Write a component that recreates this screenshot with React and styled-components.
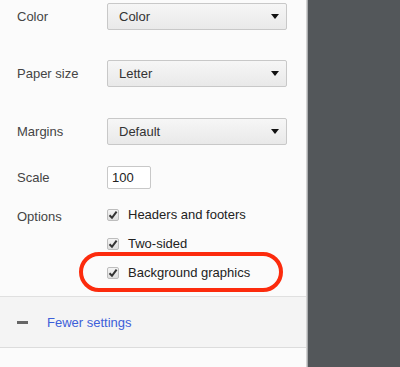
import React from 'react';
import styled, { createGlobalStyle } from 'styled-components';

const GlobalStyle = createGlobalStyle`
  html, body {
    margin: 0;
    padding: 0;
    background: #53575a;
    font-family: "Liberation Sans", Arial, sans-serif;
  }
`;

const Page = styled.div`
  display: flex;
  height: 367px;
  overflow: hidden;
`;

const Sidebar = styled.div`
  position: relative;
  width: 307px;
  height: 367px;
  background: #fbfbfb;
  border-right: 1px solid #d2d2d2;
  box-shadow: 1px 0 0 #a9abad;
  padding-top: 3px;
  box-sizing: border-box;
  overflow: hidden;
`;

const Row = styled.div`
  display: flex;
  align-items: ${(props) => (props.top ? 'flex-start' : 'center')};
  height: ${(props) => props.h}px;
  margin-bottom: ${(props) => props.mb || 0}px;
`;

const Label = styled.div`
  width: 90px;
  padding-left: 17px;
  font-size: 13px;
  color: #444;
  padding-top: ${(props) => props.pt || 0}px;
`;

const Select = styled.div`
  display: flex;
  align-items: center;
  justify-content: space-between;
  width: 180px;
  height: 27px;
  box-sizing: border-box;
  padding: 0 7px 0 11px;
  border: 1px solid #c8c8c8;
  border-radius: 2px;
  background: linear-gradient(#f6f6f6, #e9e9e9);
  font-size: 13px;
  color: #333;
`;

const Arrow = styled.span`
  width: 0;
  height: 0;
  border-left: 4px solid transparent;
  border-right: 4px solid transparent;
  border-top: 5px solid #111;
`;

const Input = styled.div`
  width: 44px;
  height: 23px;
  box-sizing: border-box;
  border: 1px solid #c8c8c8;
  border-radius: 2px;
  background: #fff;
  padding-left: 4px;
  display: flex;
  align-items: center;
  font-size: 13px;
  color: #222;
`;

const Options = styled.div`
  display: flex;
  flex-direction: column;
`;

const OptionRow = styled.div`
  display: flex;
  align-items: center;
  height: 29px;
  font-size: 13px;
  color: #222;
`;

const Check = styled.span`
  width: 12px;
  height: 12px;
  box-sizing: border-box;
  margin-right: 9px;
  border: 1px solid #bdbdbd;
  border-radius: 2px;
  background: linear-gradient(#f4f4f4, #dedede);
  display: flex;
  align-items: center;
  justify-content: center;
`;

const Divider = styled.div`
  border-top: 1px solid #e0e0e0;
  margin-top: 9px;
`;

const Footer = styled.div`
  display: flex;
  align-items: center;
  height: 50px;
  background: #f4f4f4;
  border-bottom: 1px solid #dcdcdc;
  padding-left: 17px;
`;

const Minus = styled.span`
  width: 11px;
  height: 3px;
  background: #666;
  margin-right: 19px;
`;

const Link = styled.span`
  font-size: 13px;
  color: #3d5fd9;
`;

const NextRow = styled.div`
  padding: 18px 0 0 30px;
  font-size: 13px;
  color: #999;
  white-space: nowrap;
`;

const Highlight = styled.div`
  position: absolute;
  left: 79px;
  top: 252px;
  width: 204px;
  height: 40px;
  box-sizing: border-box;
  border: 4px solid #fc2b0d;
  border-radius: 20px;
`;

const Preview = styled.div`
  flex: 1;
  background: #53575a;
`;

const CheckMark = () => (
  <svg width="10" height="10" viewBox="0 0 10 10">
    <path d="M1.5 5.2 L4 7.8 L8.6 1.6" fill="none" stroke="#333" strokeWidth="2" />
  </svg>
);

const SelectRow = ({ label, value, mb }) => (
  <Row h={27} mb={mb}>
    <Label>{label}</Label>
    <Select>
      {value}
      <Arrow />
    </Select>
  </Row>
);

const options = ['Headers and footers', 'Two-sided', 'Background graphics'];

export default function App() {
  return (
    <Page>
      <GlobalStyle />
      <Sidebar>
        <SelectRow label="Color" value="Color" mb={30} />
        <SelectRow label="Paper size" value="Letter" mb={31} />
        <SelectRow label="Margins" value="Default" mb={21} />
        <Row h={23} mb={11}>
          <Label>Scale</Label>
          <Input>100</Input>
        </Row>
        <Row top h={87}>
          <Label pt={9}>Options</Label>
          <Options>
            {options.map((o) => (
              <OptionRow key={o}>
                <Check>
                  <CheckMark />
                </Check>
                {o}
              </OptionRow>
            ))}
          </Options>
        </Row>
        <Divider />
        <Footer>
          <Minus />
          <Link>Fewer settings</Link>
        </Footer>
        <NextRow>Print using system dialog... (⌥⌘P)</NextRow>
        <Highlight />
      </Sidebar>
      <Preview />
    </Page>
  );
}
